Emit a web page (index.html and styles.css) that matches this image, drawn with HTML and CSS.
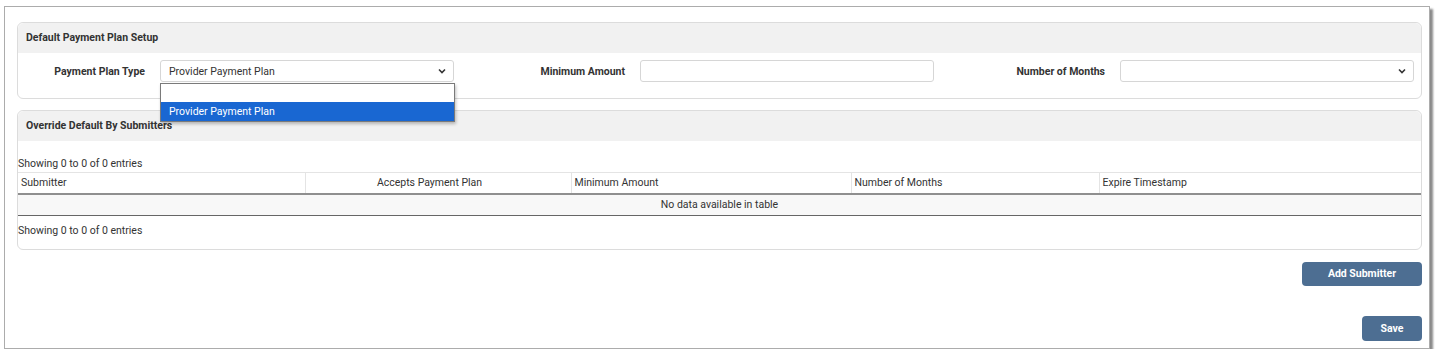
FILE: index.html
```html
<!DOCTYPE html>
<html lang="en">
<head>
    <meta charset="UTF-8">
    <meta name="viewport" content="width=device-width, initial-scale=1.0">
    <title>Payment Plan</title>
    <link rel="stylesheet" href="styles.css">
</head>
<body>
    <div class="frame">
        <div class="panel">
            <div class="panel-heading">Default Payment Plan Setup</div>
            <div class="panel-body setup-row">
                <div class="field">
                    <label>Payment Plan Type</label>
                    <div class="select-wrap">
                        <div class="fake-select">
                            <span>Provider Payment Plan</span>
                            <svg width="8" height="6" viewBox="0 0 8 6"><path d="M1 1.5 L4 4.5 L7 1.5" fill="none" stroke="#333" stroke-width="1.6"/></svg>
                        </div>
                        <ul class="dropdown">
                            <li></li>
                            <li class="selected">Provider Payment Plan</li>
                        </ul>
                    </div>
                </div>
                <div class="field">
                    <label>Minimum Amount</label>
                    <input type="text" class="text-input">
                </div>
                <div class="field">
                    <label>Number of Months</label>
                    <div class="fake-select">
                        <span></span>
                        <svg width="8" height="6" viewBox="0 0 8 6"><path d="M1 1.5 L4 4.5 L7 1.5" fill="none" stroke="#333" stroke-width="1.6"/></svg>
                    </div>
                </div>
            </div>
        </div>

        <div class="panel panel-second">
            <div class="panel-heading">Override Default By Submitters</div>
            <div class="panel-body table-body">
                <div class="info">Showing 0 to 0 of 0 entries</div>
                <table class="grid">
                    <thead>
                        <tr>
                            <th class="col-sub">Submitter</th>
                            <th class="col-acc">Accepts Payment Plan</th>
                            <th class="col-min">Minimum Amount</th>
                            <th class="col-num">Number of Months</th>
                            <th class="col-exp">Expire Timestamp</th>
                        </tr>
                    </thead>
                    <tbody>
                        <tr>
                            <td colspan="5" class="empty">No data available in table</td>
                        </tr>
                    </tbody>
                </table>
                <div class="info info-bottom">Showing 0 to 0 of 0 entries</div>
            </div>
        </div>

        <div class="actions">
            <button class="btn btn-add">Add Submitter</button>
            <button class="btn btn-save">Save</button>
        </div>
    </div>
</body>
</html>
```

FILE: styles.css
```css
body {
    margin: 0;
    padding: 0;
    font-family: 'Roboto', 'Liberation Sans', sans-serif;
    font-size: 10.5px;
    color: #333;
    background: #fff;
}

.frame {
    margin: 6px 7px 0 4px;
    height: 326px;
    padding: 15px 7px 0 12px;
    border: 1px solid #acacac;
    box-shadow: 3px 3px 2px #8a8a8a;
    background: #fff;
}

.panel {
    border: 1px solid #dcdcdc;
    border-radius: 6px;
    background: #fff;
}

.panel-second {
    margin-top: 11px;
}

.panel-heading {
    background: #f1f1f1;
    height: 30px;
    line-height: 30px;
    padding-left: 8px;
    font-weight: bold;
    border-radius: 6px 6px 0 0;
}

/* first panel */
.setup-row {
    display: grid;
    grid-template-columns: repeat(3, 480px);
    padding: 7px 0 16px;
}

.field {
    display: grid;
    grid-template-columns: 127px 294px;
    column-gap: 15px;
    align-items: center;
}

.field label {
    text-align: right;
    font-weight: bold;
}

.select-wrap {
    position: relative;
}

.fake-select,
.text-input {
    box-sizing: border-box;
    height: 22px;
    width: 294px;
    border: 1px solid #d6d6d6;
    border-radius: 3px;
    background: #fff;
    font-family: inherit;
    font-size: 10.5px;
    color: #333;
}

.fake-select {
    display: flex;
    align-items: center;
    justify-content: space-between;
    padding: 0 7px 0 8px;
}

.text-input {
    padding: 0 8px;
    outline: none;
}

.dropdown {
    position: absolute;
    top: 23px;
    left: 0;
    width: 295px;
    box-sizing: border-box;
    margin: 0;
    padding: 0;
    list-style: none;
    border: 1px solid #7a7a7a;
    background: #fff;
    box-shadow: 1px 2px 3px rgba(0, 0, 0, 0.25);
    z-index: 5;
}

.dropdown li {
    height: 18px;
    line-height: 18px;
    padding-left: 8px;
}

.dropdown li.selected {
    height: 19px;
    line-height: 19px;
    background: #1967d2;
    color: #fff;
}

/* second panel */
.table-body {
    padding: 15px 0 11px;
}

.info {
    line-height: 15px;
    height: 15px;
}

.info-bottom {
    margin-top: 7px;
}

.grid {
    width: 100%;
    border-collapse: collapse;
    table-layout: fixed;
    margin-top: 1px;
}

.grid th {
    box-sizing: border-box;
    font-weight: normal;
    text-align: left;
    height: 21px;
    padding: 0 3px;
    border-top: 1px solid #e4e4e4;
    border-right: 1px solid #e4e4e4;
    border-bottom: 2px solid #8f8f8f;
}

.grid th:last-child {
    border-right: none;
}

.grid .col-sub { width: 287px; }
.grid .col-acc { width: 266px; text-align: center; padding-right: 20px; }
.grid .col-min { width: 280px; }
.grid .col-num { width: 248px; }

.grid td.empty {
    height: 20px;
    padding: 0;
    text-align: center;
    background: #f8f8f8;
    border-bottom: 1px solid #666;
}

.actions {
    display: flex;
    flex-direction: column;
    align-items: flex-end;
}

.btn {
    border: none;
    border-radius: 4px;
    background: #4d6e92;
    color: #fff;
    font-family: inherit;
    font-size: 10.5px;
    font-weight: bold;
    cursor: pointer;
}

.btn-add {
    margin-top: 12px;
    width: 120px;
    height: 24px;
}

.btn-save {
    margin-top: 30px;
    width: 60px;
    height: 25px;
}
```
